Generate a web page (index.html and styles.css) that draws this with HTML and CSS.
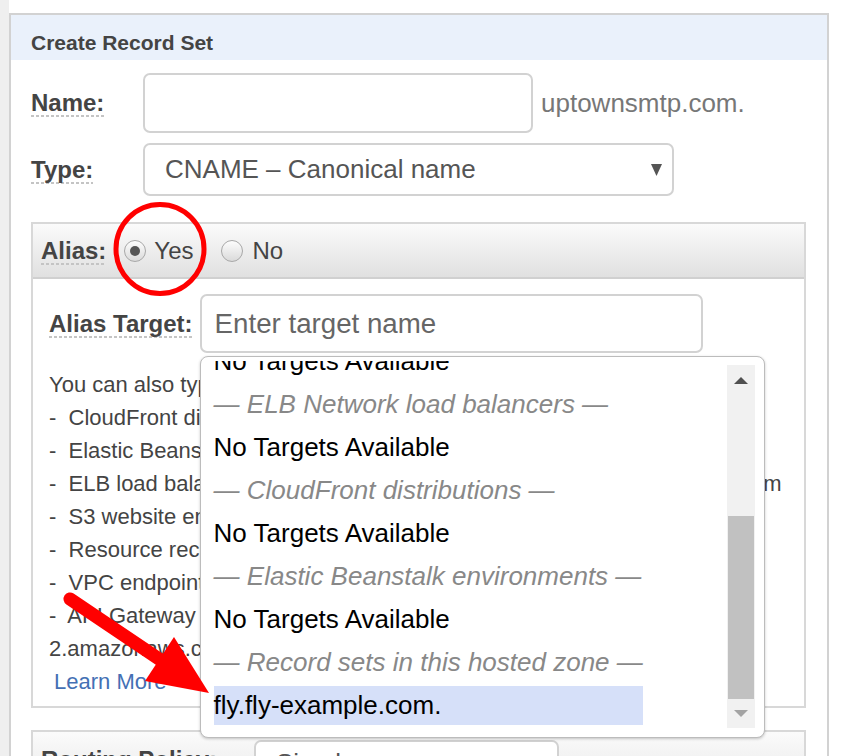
FILE: index.html
```html
<!DOCTYPE html>
<html>
<head>
<meta charset="utf-8">
<link rel="stylesheet" href="styles.css">
</head>
<body>
<div class="page">
  <div class="strip"></div>
  <div class="panel">
    <div class="panel-title">Create Record Set</div>
    <div class="panel-body">
      <div class="row">
        <div class="label-col"><span class="label">Name:</span></div>
        <div class="input name-input"></div>
        <span class="suffix">uptownsmtp.com.</span>
      </div>
      <div class="row row-type">
        <div class="label-col"><span class="label">Type:</span></div>
        <div class="input type-select">
          <span>CNAME – Canonical name</span>
          <svg class="caret" width="11" height="12" viewBox="0 0 11 12"><polygon points="0,0 11,0 5.5,12" fill="#555"/></svg>
        </div>
      </div>
      <div class="box alias-box">
        <div class="box-head">
          <span class="label">Alias:</span>
          <span class="radio checked"></span><span class="radio-text">Yes</span>
          <span class="radio radio-no"></span><span class="radio-text radio-text-no">No</span>
        </div>
        <div class="box-body">
          <div class="target-row">
            <span class="label target-label">Alias Target:</span>
            <div class="target-wrap">
              <div class="input target-input">Enter target name</div>
              <div class="dropdown">
                <div class="opts">
                  <div class="opt-list">
                    <div class="opt">No Targets Available</div>
                    <div class="opt group">— ELB Network load balancers —</div>
                    <div class="opt">No Targets Available</div>
                    <div class="opt group">— CloudFront distributions —</div>
                    <div class="opt">No Targets Available</div>
                    <div class="opt group">— Elastic Beanstalk environments —</div>
                    <div class="opt">No Targets Available</div>
                    <div class="opt group">— Record sets in this hosted zone —</div>
                    <div class="opt sel">fly.fly-example.com.</div>
                  </div>
                </div>
                <div class="sb">
                  <div class="sb-btn"><svg width="14" height="7" viewBox="0 0 14 7"><polygon points="0,7 14,7 7,0" fill="#505050"/></svg></div>
                  <div class="thumb"></div>
                  <div class="sb-btn down"><svg width="14" height="7" viewBox="0 0 14 7"><polygon points="0,0 14,0 7,7" fill="#a3a3a3"/></svg></div>
                </div>
              </div>
            </div>
          </div>
          <div class="help">
            <div>You can also type the domain name for the resource. Examples:</div>
            <div>-&nbsp; CloudFront distribution domain name: d111111abcdef8.cloudfront.net</div>
            <div>-&nbsp; Elastic Beanstalk environment CNAME: example.elasticbeanstalk.com</div>
            <div>-&nbsp; ELB load balancer DNS name: example-1.us-east-2.elb.amazonaws.com</div>
            <div>-&nbsp; S3 website endpoint: s3-website.us-east-2.amazonaws.com</div>
            <div>-&nbsp; Resource record set in this hosted zone: www.example.com</div>
            <div>-&nbsp; VPC endpoint: example.us-east-2.vpce.amazonaws.com</div>
            <div>-&nbsp; API Gateway custom regional API: d-abcde12345.execute-api.us-west-</div>
            <div>2.amazonaws.com</div>
            <div><a class="learn" href="#">Learn More</a></div>
          </div>
        </div>
      </div>
      <div class="box routing-box">
        <div class="box-head routing-head">
          <span class="label routing-label">Routing Policy:</span>
          <div class="input routing-select">Simple</div>
        </div>
      </div>
    </div>
  </div>
</div>
<svg class="annot" width="845" height="756" viewBox="0 0 845 756">
  <ellipse cx="160" cy="249" rx="44" ry="44.5" fill="none" stroke="#ff0000" stroke-width="5"/>
  <line x1="70" y1="599" x2="165" y2="663" stroke="#ff0000" stroke-width="13" stroke-linecap="round"/>
  <polygon points="209,693 174,637 145,681" fill="#ff0000"/>
</svg>
</body>
</html>
```
FILE: styles.css
```css
html, body {
  margin: 0;
  padding: 0;
}
body {
  width: 845px;
  height: 756px;
  overflow: hidden;
  background: #fff;
  font-family: "Liberation Sans", Arial, sans-serif;
  position: relative;
}
.page {
  display: flex;
  align-items: flex-start;
}
.strip {
  width: 9px;
  height: 756px;
  background: #efefef;
  flex: none;
}
.panel {
  width: 820px;
  height: 800px;
  margin-top: 13px;
  border: 2px solid #d2d2d2;
  border-bottom: none;
  box-sizing: border-box;
  flex: none;
}
.panel-title {
  background: #eaf1fb;
  height: 45px;
  box-sizing: border-box;
  padding: 16px 20px 0;
  font-size: 21px;
  font-weight: bold;
  color: #444;
  line-height: 24px;
}
.panel-body {
  padding: 13px 21px 0 20px;
}
.row {
  display: flex;
  align-items: center;
}
.row-type {
  margin-top: 10px;
}
.label-col {
  width: 112px;
  flex: none;
}
.label {
  display: inline-block;
  font-size: 24px;
  font-weight: bold;
  color: #444;
  line-height: 28px;
  background-image: linear-gradient(to right, #c4c4c4 60%, transparent 60%);
  background-size: 5px 2px;
  background-repeat: repeat-x;
  background-position: left bottom;
}
.input {
  box-sizing: border-box;
  border: 2px solid #d2d2d2;
  border-radius: 7px;
  background: #fff;
  flex: none;
}
.name-input {
  width: 390px;
  height: 60px;
}
.suffix {
  margin-left: 8px;
  font-size: 26px;
  color: #777;
}
.type-select {
  width: 531px;
  height: 53px;
  display: flex;
  align-items: center;
  justify-content: space-between;
  padding: 0 10px 0 20px;
  font-size: 26px;
  color: #555;
}
.box {
  margin-top: 26px;
  border: 2px solid #d8d8d8;
}
.box-head {
  height: 53px;
  display: flex;
  align-items: center;
  padding-left: 8px;
  background: linear-gradient(#fbfbfb, #e0e0e0);
  border-bottom: 2px solid #d0d0d0;
}
.radio {
  width: 22px;
  height: 22px;
  box-sizing: border-box;
  border-radius: 50%;
  border: 1px solid #a8a8a8;
  background: linear-gradient(#fdfdfd, #dadada);
  margin-left: 18px;
  display: flex;
  align-items: center;
  justify-content: center;
  flex: none;
}
.radio.checked::after {
  content: "";
  width: 10px;
  height: 10px;
  border-radius: 50%;
  background: #555;
}
.radio-no {
  margin-left: 27px;
}
.radio-text {
  font-size: 24px;
  color: #444;
  margin-left: 8px;
}
.radio-text-no {
  margin-left: 10px;
}
.box-body {
  padding: 15px 16px 8px;
}
.target-row {
  display: flex;
  align-items: center;
}
.target-label {
  margin-right: 7px;
}
.target-wrap {
  position: relative;
}
.target-input {
  width: 503px;
  height: 59px;
  padding-left: 13px;
  display: flex;
  align-items: center;
  font-size: 27.7px;
  color: #666;
}
.help {
  margin-top: 15px;
  font-size: 22px;
  line-height: 33px;
  color: #444;
  white-space: nowrap;
}
.learn {
  color: #4470b4;
  text-decoration: none;
  margin-left: 5px;
}
.dropdown {
  position: absolute;
  top: 62px;
  left: 0;
  width: 565px;
  height: 382px;
  box-sizing: border-box;
  border: 1px solid #bcbcbc;
  border-radius: 8px;
  background: #fff;
  box-shadow: 0 1px 3px rgba(0, 0, 0, 0.22);
  display: flex;
  overflow: hidden;
  z-index: 2;
}
.opts {
  flex: 1;
  overflow: hidden;
  margin-top: 4px;
  padding-left: 13px;
}
.opt-list {
  width: max-content;
  margin-top: -19px;
}
.opt {
  height: 39px;
  line-height: 39px;
  margin-bottom: 4px;
  font-size: 26px;
  color: #000;
}
.opt.group {
  font-style: italic;
  color: #888;
}
.opt.sel {
  background: #d6e0f9;
}
.sb {
  width: 28px;
  flex: none;
  margin: 8px 9px 9px 0;
  background: #f1f1f1;
  display: flex;
  flex-direction: column;
  align-items: center;
}
.sb-btn {
  height: 30px;
  width: 28px;
  display: flex;
  align-items: center;
  justify-content: center;
  flex: none;
}
.sb-btn svg {
  display: block;
}
.sb-btn.down {
  margin-top: auto;
  height: 29px;
}
.thumb {
  width: 26px;
  height: 183px;
  background: #c1c1c1;
  margin-top: 121px;
  flex: none;
}
.routing-box {
  margin-top: 22px;
}
.routing-head {
  height: 80px;
  align-items: flex-start;
  padding-top: 8px;
  box-sizing: border-box;
}
.routing-label {
  margin-top: 6px;
}
.routing-select {
  width: 305px;
  height: 53px;
  margin-left: 37px;
  padding: 6px 0 0 20px;
  font-size: 26px;
  color: #555;
}
.annot {
  position: absolute;
  left: 0;
  top: 0;
  pointer-events: none;
  z-index: 5;
}
```
